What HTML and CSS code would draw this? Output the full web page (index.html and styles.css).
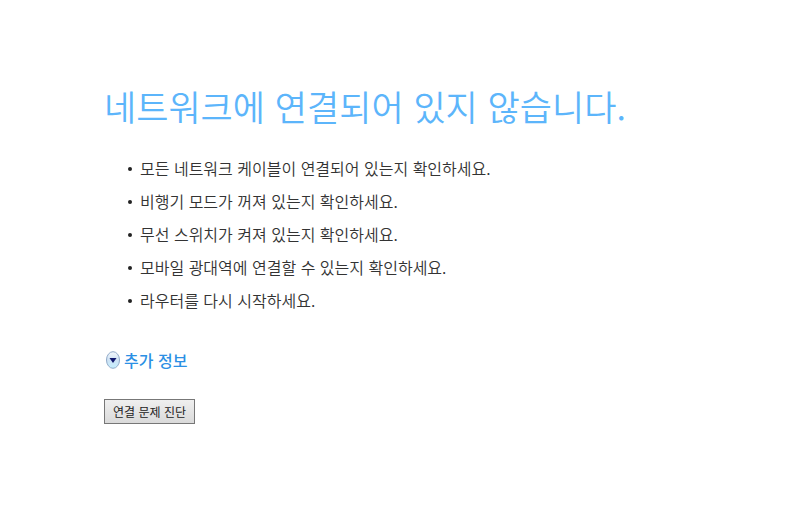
FILE: index.html
```html
<!DOCTYPE html>
<html lang="ko">
<head>
<meta charset="utf-8">
<title>네트워크에 연결되어 있지 않습니다.</title>
<link rel="stylesheet" href="styles.css">
</head>
<body>
<main class="page">
  <h1 class="title">네트워크에 연결되어 있지 않습니다.</h1>
  <ul class="tips">
    <li>모든 네트워크 케이블이 연결되어 있는지 확인하세요.</li>
    <li>비행기 모드가 꺼져 있는지 확인하세요.</li>
    <li>무선 스위치가 켜져 있는지 확인하세요.</li>
    <li>모바일 광대역에 연결할 수 있는지 확인하세요.</li>
    <li>라우터를 다시 시작하세요.</li>
  </ul>
  <a class="more" href="#more">
    <svg class="more-icon" viewBox="0 0 16 18" aria-hidden="true">
      <defs>
        <linearGradient id="face" x1="0" y1="0" x2="0" y2="1">
          <stop offset="0" stop-color="#f4f8fc"/>
          <stop offset="0.5" stop-color="#cfe2f4"/>
          <stop offset="1" stop-color="#c4f0ff"/>
        </linearGradient>
      </defs>
      <ellipse cx="9" cy="9" rx="6.5" ry="8.3" fill="url(#face)" stroke="#8fa9c8"/>
      <path d="M5.500 7h7L9 12z" fill="#10186e"/>
    </svg>
    <span>추가 정보</span>
  </a>
  <button class="diagnose" type="button">연결 문제 진단</button>
</main>
</body>
</html>
```
FILE: styles.css
```css
body {
  margin: 0;
  background: #fff;
  color: #333;
  font-family: "Noto Sans CJK KR", sans-serif;
}

.page {
  display: flex;
  flex-direction: column;
  align-items: flex-start;
  padding: 80px 104px 32px;
}

.title {
  margin: 0;
  color: #5cb5fb;
  font-size: 35px;
  font-weight: 350;
  line-height: 52px;
}

.tips {
  display: grid;
  margin: 20px 0 32px;
  padding: 0;
  list-style: none;
  font-size: 16px;
  font-weight: 350;
  line-height: 33px;
}

.tips li {
  display: flex;
  align-items: center;
  gap: 8px;
  padding-left: 24px;
}

.tips li::before {
  width: 4px;
  height: 4px;
  border-radius: 50%;
  background: #222;
  content: "";
}

.more {
  display: flex;
  align-items: center;
  gap: 4px;
  margin-bottom: 28px;
  color: #2b90e4;
  font-size: 16px;
  font-weight: 500;
  line-height: 22px;
  text-decoration: none;
}

.more-icon {
  width: 16px;
  height: 18px;
}

.diagnose {
  padding: 0 8px;
  border: 1px solid #777;
  background: linear-gradient(#efefef, #dadada);
  color: #222;
  font: 12px/23px "Noto Sans CJK KR", sans-serif;
}
```
